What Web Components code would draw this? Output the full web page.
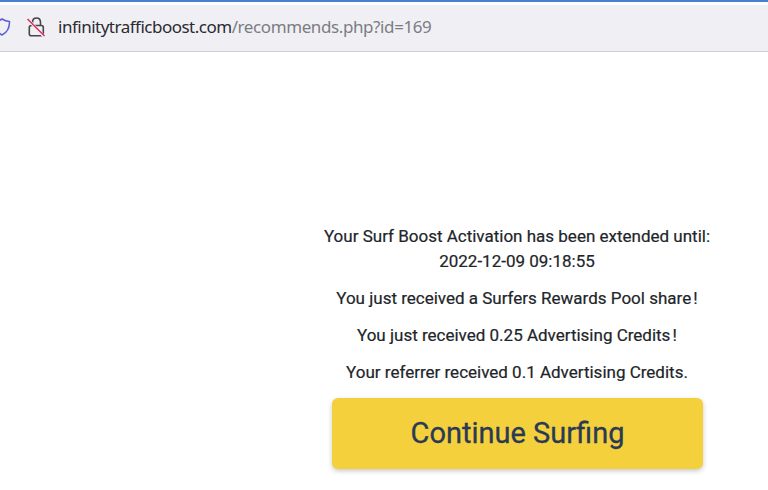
<!DOCTYPE html>
<html>
<head>
<meta charset="utf-8">
<style>
  html, body { margin: 0; padding: 0; background: #fff; overflow: hidden; }
  body { width: 768px; height: 490px; }
  .tight { word-spacing: -2px; }
</style>
</head>
<body>
<browser-bar url-host="infinitytrafficboost.com" url-path="/recommends.php?id=169"></browser-bar>
<surf-result>
  <result-line>Your Surf Boost Activation has been extended until:<br>2022-12-09 09:18:55</result-line>
  <result-line>You just received a Surfers Rewards Pool <span class="tight">share !</span></result-line>
  <result-line>You just received 0.25 Advertising <span class="tight">Credits !</span></result-line>
  <result-line>Your referrer received 0.1 Advertising Credits.</result-line>
  <surf-button>Continue Surfing</surf-button>
</surf-result>

<script>
class BrowserBar extends HTMLElement {
  constructor() {
    super();
    const shadow = this.attachShadow({ mode: 'open' });
    const host = this.getAttribute('url-host') || '';
    const path = this.getAttribute('url-path') || '';
    shadow.innerHTML = `
      <style>
        :host {
          display: block;
          height: 52px;
          box-sizing: border-box;
          background: #fff;
          border-top: 2px solid #4a7fd6;
          border-bottom: 1px solid #d0d0d4;
          padding-top: 3px;
          overflow: hidden;
        }
        .field {
          height: 46px;
          background: #f0f0f4;
          display: flex;
          align-items: center;
          font-family: "Noto Sans", "Open Sans", sans-serif;
          font-size: 17px;
          white-space: nowrap;
        }
        .shield { margin: -3px 0 0 -7px; flex: none; }
        .lock { margin: -3px 0 0 15px; flex: none; }
        .host { margin: -3px 0 0 12px; color: #2b2a33; letter-spacing: -0.5px; }
        .path { margin-top: -3px; color: #7c7c85; letter-spacing: -0.4px; }
      </style>
      <div class="field">
        <svg class="shield" width="18" height="20" viewBox="0 0 18 20" fill="none">
          <path d="M9 2 C11.500 3.600 14 4.400 16.500 4.600 C16.600 11 14 15.500 9 18 C4 15.500 1.400 11 1.500 4.600 C4 4.400 6.500 3.600 9 2 Z" stroke="#5b5bd6" stroke-width="1.500"/>
        </svg>
        <svg class="lock" width="20" height="22" viewBox="0 0 20 22" fill="none">
          <path d="M6.500 9 V6.500 C6.500 3.800 8 2 10.500 2 C13 2 14.500 3.800 14.500 6.500 V9" stroke="#45454c" stroke-width="1.600"/>
          <rect x="3.300" y="9.500" width="14" height="10.300" rx="2" stroke="#45454c" stroke-width="1.600"/>
          <path d="M1.500 3 L18 20.500" stroke="#f0f0f4" stroke-width="3"/>
          <path d="M1.500 3 L18.500 20" stroke="#e22850" stroke-width="1.500"/>
        </svg>
        <span class="host">${host}</span><span class="path">${path}</span>
      </div>
    `;
  }
}

class SurfResult extends HTMLElement {
  constructor() {
    super();
    const shadow = this.attachShadow({ mode: 'open' });
    shadow.innerHTML = `
      <style>
        :host {
          display: flex;
          flex-direction: column;
          align-items: center;
          box-sizing: border-box;
          width: 390px;
          margin-left: 322px;
          padding-top: 172px;
          font-family: Roboto, "Noto Sans", sans-serif;
          color: #212529;
          -webkit-text-stroke: 0.2px #212529;
        }
      </style>
      <slot></slot>
    `;
  }
}

class ResultLine extends HTMLElement {
  constructor() {
    super();
    const shadow = this.attachShadow({ mode: 'open' });
    shadow.innerHTML = `
      <style>
        :host {
          display: block;
          text-align: center;
          font-size: 17px;
          line-height: 25px;
          margin-bottom: 12px;
          white-space: nowrap;
        }
      </style>
      <slot></slot>
    `;
  }
}

class SurfButton extends HTMLElement {
  constructor() {
    super();
    const shadow = this.attachShadow({ mode: 'open' });
    shadow.innerHTML = `
      <style>
        :host {
          display: flex;
          align-items: center;
          justify-content: center;
          box-sizing: border-box;
          width: 371px;
          height: 71px;
          margin: 1px 0 0 1px;
          padding-bottom: 1px;
          background: #f5d03d;
          color: #2a3a55;
          border-radius: 6px;
          box-shadow: 0 2px 5px rgba(0,0,0,.22);
          font-size: 29px;
          -webkit-text-stroke: 0.3px #2a3a55;
        }
      </style>
      <slot></slot>
    `;
  }
}

customElements.define('browser-bar', BrowserBar);
customElements.define('surf-result', SurfResult);
customElements.define('result-line', ResultLine);
customElements.define('surf-button', SurfButton);
</script>
</body>
</html>
